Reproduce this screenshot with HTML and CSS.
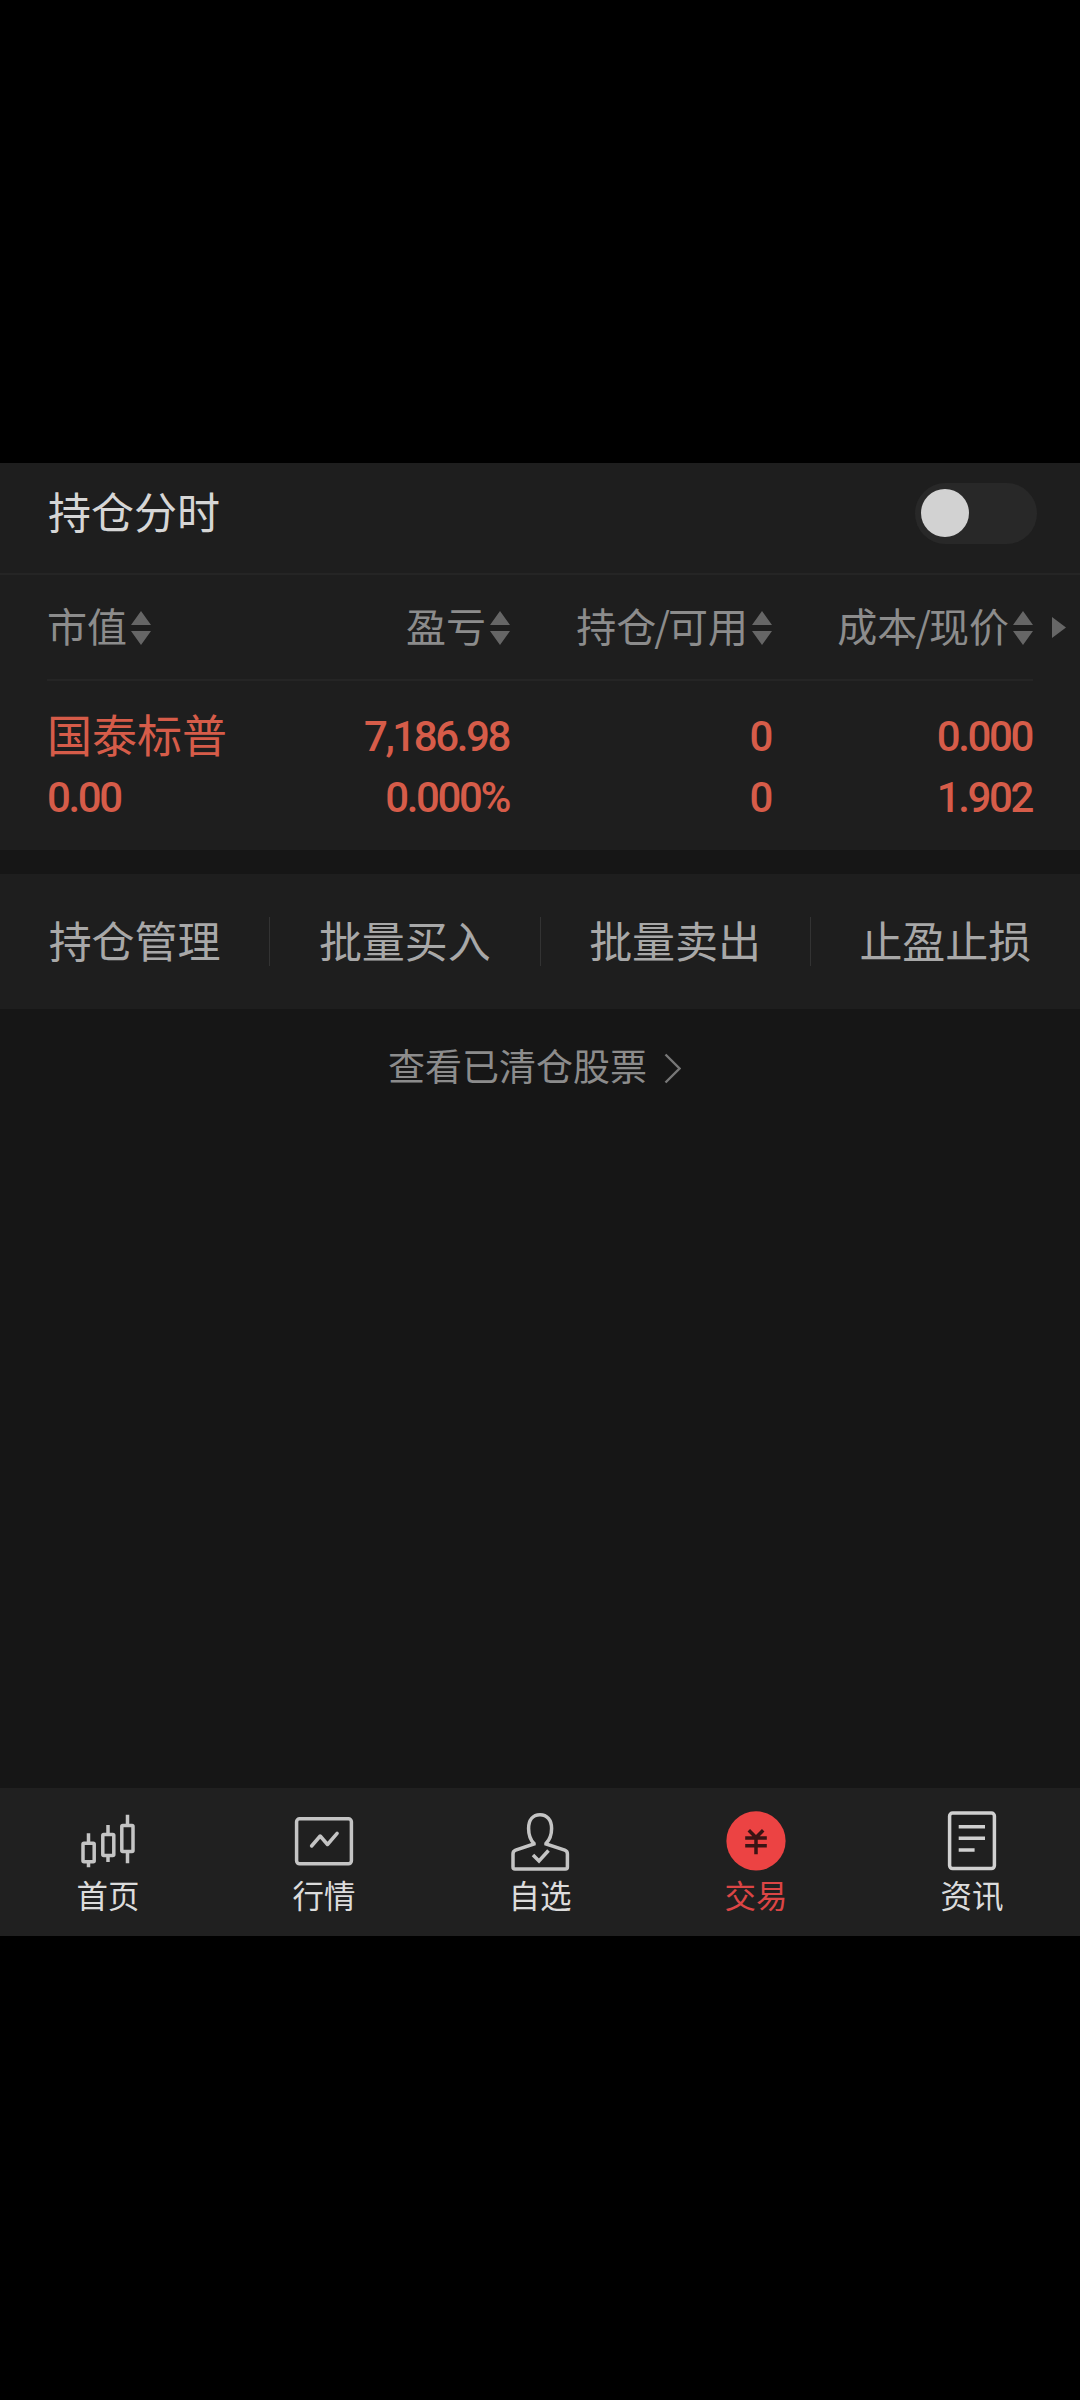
FILE: index.html
```html
<!DOCTYPE html>
<html lang="zh-CN">
<head>
    <meta charset="UTF-8">
    <meta name="viewport" content="width=device-width, initial-scale=1.0">
    <title>持仓</title>
    <link rel="stylesheet" href="styles.css">
</head>
<body>
    <div class="app">
        <header class="topbar">
            <h1>持仓分时</h1>
            <button class="switch"><span class="knob"></span></button>
        </header>

        <section class="holdings">
            <div class="row head">
                <div class="sort">市值<svg class="arrows" viewBox="0 0 20 34"><path d="M10 0L20 14H0zM0 20H20L10 34z"/></svg></div>
                <div class="sort">盈亏<svg class="arrows" viewBox="0 0 20 34"><path d="M10 0L20 14H0zM0 20H20L10 34z"/></svg></div>
                <div class="sort">持仓<span class="slash">/</span>可用<svg class="arrows" viewBox="0 0 20 34"><path d="M10 0L20 14H0zM0 20H20L10 34z"/></svg></div>
                <div class="sort">成本<span class="slash">/</span>现价<svg class="arrows" viewBox="0 0 20 34"><path d="M10 0L20 14H0zM0 20H20L10 34z"/></svg></div>
                <svg class="more" viewBox="0 0 14 21"><path d="M0 0L14 10.5L0 21z"/></svg>
            </div>
            <div class="row stock">
                <div><p class="name">国泰标普</p><p>0.00</p></div>
                <div><p>7,186.98</p><p>0.000%</p></div>
                <div><p>0</p><p>0</p></div>
                <div><p>0.000</p><p>1.902</p></div>
            </div>
        </section>

        <nav class="actions">
            <a href="#">持仓管理</a>
            <a href="#">批量买入</a>
            <a href="#">批量卖出</a>
            <a href="#">止盈止损</a>
        </nav>

        <a class="cleared" href="#">查看已清仓股票<svg class="chevron" viewBox="0 0 17 31"><path d="M1.5 1.5L15.5 15.5L1.5 29.5"/></svg></a>

        <footer class="tabs">
            <a href="#">
                <svg class="icon" viewBox="0 0 68 68">
                    <path d="M14.5 25.3V35M14.5 51V59.3M34 17V26.5M34 46.5V54M53.5 6.7V17.5M53.5 42.5V55.3"/>
                    <rect x="9" y="35.3" width="11.2" height="18.4" rx="1"/>
                    <rect x="28.8" y="26.6" width="11" height="21" rx="1"/>
                    <rect x="47.8" y="17.6" width="11.2" height="26" rx="1"/>
                </svg>
                <span>首页</span>
            </a>
            <a href="#">
                <svg class="icon" viewBox="0 0 68 68">
                    <rect x="6.6" y="10.8" width="54.8" height="45" rx="3"/>
                    <path d="M21.6 38L30.2 28L37.5 36.5L47.1 25.4" stroke-linecap="round" stroke-linejoin="round"/>
                </svg>
                <span>行情</span>
            </a>
            <a href="#">
                <svg class="icon" viewBox="0 0 68 68">
                    <path d="M28 35.5C24.5 32 22.6 27.5 22.6 20.5C22.6 12 27 6.8 34 6.8C41 6.8 45.6 12 45.6 20.5C45.6 27.5 43.5 32 40 35.5V36L58.8 42.2Q61.4 43.2 61.4 46V59Q61.4 61 59.4 61H9Q7 61 7 59V46Q7 43.2 9.6 42.2L28 36z"/>
                    <path d="M27 47L33 53L42.5 42.5"/>
                </svg>
                <span>自选</span>
            </a>
            <a class="active" href="#">
                <svg class="icon coin" viewBox="0 0 68 68">
                    <circle cx="34" cy="32.9" r="29.6"/>
                    <path d="M26.8 22.3L34 29.5L41.2 22.3M34 29V46.3M23.2 29.9H44.8M23.2 37.7H44.8"/>
                </svg>
                <span>交易</span>
            </a>
            <a href="#">
                <svg class="icon news" viewBox="0 0 68 68">
                    <rect x="11.6" y="5" width="44.8" height="55.6" rx="3"/>
                    <path d="M20.7 18.7H47M20.7 30.3H47M20.7 42H36.6"/>
                </svg>
                <span>资讯</span>
            </a>
        </footer>
    </div>
</body>
</html>
```
FILE: styles.css
```css
*{
    margin: 0px;
    padding: 0px;
    box-sizing: border-box;
}
body{
    background-color: #000;
    font-family: "Noto Sans CJK SC", sans-serif;
    font-weight: 400;
    padding-top: 463px;
    height: 2400px;
    overflow: hidden;
}
a{
    text-decoration: none;
    color: inherit;
}
.app{
    display: flex;
    flex-direction: column;
    height: 1473px;
    background-color: #161616;
}
.topbar{
    display: flex;
    align-items: center;
    justify-content: space-between;
    height: 112px;
    padding: 0px 43px 12px 48px;
    background-color: #1e1e1e;
    border-bottom: 2px solid #252525;
    line-height: 60px;
    color: #d6d6d6;
}
h1{
    font-size: 43px;
    font-weight: 400;
    padding-bottom: 4px;
}
.switch{
    display: flex;
    align-items: center;
    width: 122px;
    height: 61px;
    padding: 0px 6px;
    border: none;
    border-radius: 31px;
    background-color: #282828;
    margin-top: 2px;
}
.knob{
    width: 48px;
    height: 48px;
    border-radius: 50%;
    background-color: #d2d2d2;
}

/* holdings table */
.holdings{
    height: 275px;
    padding: 0px 47px;
    background-color: #1e1e1e;
}
.row{
    display: grid;
    grid-template-columns: 190px 273px 262px 261px;
    position: relative;
}
.row > div + div{
    justify-content: flex-end;
    text-align: right;
}
.head{
    height: 106px;
    align-items: center;
    border-bottom: 2px solid #252525;
    font-size: 40px;
    color: #8c8c8c;
}
.sort{
    display: flex;
    align-items: center;
    line-height: 56px;
    padding-bottom: 4px;
}
.slash{
    margin: 0px -2px;
}
.arrows{
    width: 20px;
    height: 34px;
    margin: 5px 0px 0px 4px;
    fill: #666;
}
.more{
    position: absolute;
    right: -33px;
    top: 42px;
    width: 14px;
    height: 21px;
    fill: #666;
}
.stock{
    padding-top: 25px;
    font-family: Roboto, "Noto Sans CJK SC", sans-serif;
    font-size: 42px;
    font-weight: 500;
    letter-spacing: -2.4px;
    line-height: 61px;
    color: #d65c49;
}
.stock > div + div{
    padding-right: 1px;
}
.stock p{
    height: 61px;
}
.stock .name{
    font-family: "Noto Sans CJK SC", sans-serif;
    font-size: 45px;
    font-weight: 400;
    letter-spacing: 0px;
    line-height: 56px;
}

.actions{
    display: flex;
    align-items: center;
    height: 135px;
    margin-top: 24px;
    background-color: #1e1e1e;
}
.actions a{
    flex: 1;
    height: 49px;
    line-height: 44px;
    text-align: center;
    font-size: 43px;
    color: #a8a8a8;
    border-right: 1px solid #333;
}
.actions a:last-child{
    border-right: none;
}
.cleared{
    display: flex;
    align-items: center;
    justify-content: center;
    height: 112px;
    padding-right: 11px;
    font-size: 37px;
    color: #8c8c8c;
}
.chevron{
    width: 17px;
    height: 31px;
    margin: 6px 0px 0px 17px;
    fill: none;
    stroke: #777;
    stroke-width: 2.4;
}

.tabs{
    display: flex;
    height: 148px;
    margin-top: auto;
    padding-top: 20px;
    background-color: #202020;
    color: #dcdcdc;
}
.tabs a{
    flex: 1;
    display: flex;
    flex-direction: column;
    align-items: center;
    font-size: 31.5px;
    line-height: 36px;
}
.icon{
    width: 68px;
    height: 68px;
    fill: none;
    stroke: #c4c4c4;
    stroke-width: 3.5;
}
.icon rect{
    fill: #202020;
}
.news{
    stroke: #d0d0d0;
}
.tabs .active{
    color: #dc4545;
}
.coin{
    stroke: #3a1414;
}
.coin circle{
    fill: #ec4343;
    stroke: none;
}
```
